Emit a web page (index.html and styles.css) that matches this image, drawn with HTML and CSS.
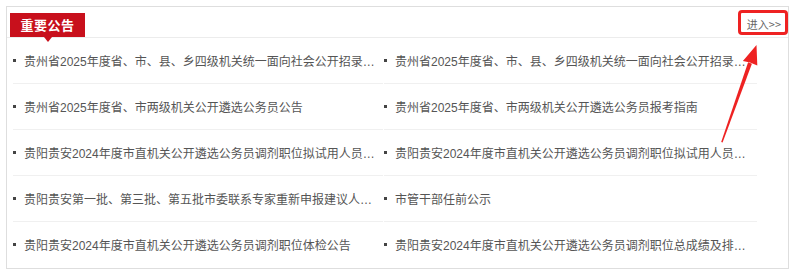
FILE: index.html
```html
<!DOCTYPE html>
<html lang="zh-CN">

<head>
    <meta charset="UTF-8" />
    <title>重要公告</title>
    <link rel="stylesheet" href="styles.css">
</head>

<body>
    <div class="notice-box">
        <div class="notice-head">
            <div class="notice-tab">重要公告</div>
            <a class="notice-more" href="#">进入&gt;&gt;</a>
        </div>
        <ul class="notice-list">
            <li><span>贵州省2025年度省、市、县、乡四级机关统一面向社会公开招录…</span></li>
            <li><span>贵州省2025年度省、市、县、乡四级机关统一面向社会公开招录…</span></li>
            <li><span>贵州省2025年度省、市两级机关公开遴选公务员公告</span></li>
            <li><span>贵州省2025年度省、市两级机关公开遴选公务员报考指南</span></li>
            <li><span>贵阳贵安2024年度市直机关公开遴选公务员调剂职位拟试用人员…</span></li>
            <li><span>贵阳贵安2024年度市直机关公开遴选公务员调剂职位拟试用人员…</span></li>
            <li><span>贵阳贵安第一批、第三批、第五批市委联系专家重新申报建议人…</span></li>
            <li><span>市管干部任前公示</span></li>
            <li><span>贵阳贵安2024年度市直机关公开遴选公务员调剂职位体检公告</span></li>
            <li><span>贵阳贵安2024年度市直机关公开遴选公务员调剂职位总成绩及排…</span></li>
        </ul>
    </div>

    <!-- annotation marks drawn over the screenshot -->
    <div class="mark-box"></div>
    <svg class="mark-arrow" width="800" height="273" viewBox="0 0 800 273">
        <polygon fill="#ee2222" points="721.2,142 722.6,142.4 751.9,63.7 748.1,62.3" />
        <polygon fill="#ee2222" points="756.5,45 742.9,61 750,62.6 757.3,65.6" />
    </svg>
</body>

</html>
```

FILE: styles.css
```css
body {
    margin: 0;
    padding: 0;
    background: #fff;
    font-family: "Noto Sans CJK SC", "Noto Sans", sans-serif;
}

.notice-box {
    margin: 6px 0 0 6px;
    width: 781px;
    height: 261px;
    border: 1px solid #dedede;
    background: #fff;
}

.notice-head {
    height: 30px;
    border-bottom: 1px solid #ececec;
    display: flex;
    justify-content: space-between;
    align-items: flex-start;
    padding: 0 7px 0 3px;
}

.notice-tab {
    position: relative;
    margin-top: 6px;
    width: 75px;
    height: 24px;
    line-height: 24px;
    background: #c8101c;
    color: #fff;
    font-size: 13px;
    font-weight: bold;
    text-align: center;
    letter-spacing: 0.5px;
}

.notice-tab::after {
    content: "";
    position: absolute;
    left: 34px;
    bottom: -5px;
    border-left: 4px solid transparent;
    border-right: 4px solid transparent;
    border-top: 5px solid #c8101c;
}

.notice-more {
    margin-top: 10px;
    font-size: 11px;
    color: #666;
    text-decoration: none;
    line-height: 14px;
}

.notice-list {
    list-style: none;
    margin: 0;
    padding: 0 6px;
    display: grid;
    grid-template-columns: 370px 373px;
    column-gap: 1px;
}

.notice-list li {
    height: 45px;
    border-bottom: 1px solid #f0f0f0;
    display: flex;
    align-items: center;
    font-family: "Liberation Sans", "Noto Sans CJK SC", sans-serif;
    font-size: 12px;
    color: #555;
}

.notice-list li:nth-last-child(-n+2) {
    border-bottom: none;
}

.notice-list li::before {
    content: "";
    width: 3px;
    height: 3px;
    background: #444;
    margin-right: 8px;
    flex-shrink: 0;
}

.notice-list span {
    max-width: 358px;
    white-space: nowrap;
    overflow: hidden;
    text-overflow: ellipsis;
}

.mark-box {
    position: absolute;
    left: 738px;
    top: 10px;
    width: 44px;
    height: 19px;
    border: 3px solid #ee2222;
    border-radius: 4px;
}

.mark-arrow {
    position: absolute;
    left: 0;
    top: 0;
}
```
